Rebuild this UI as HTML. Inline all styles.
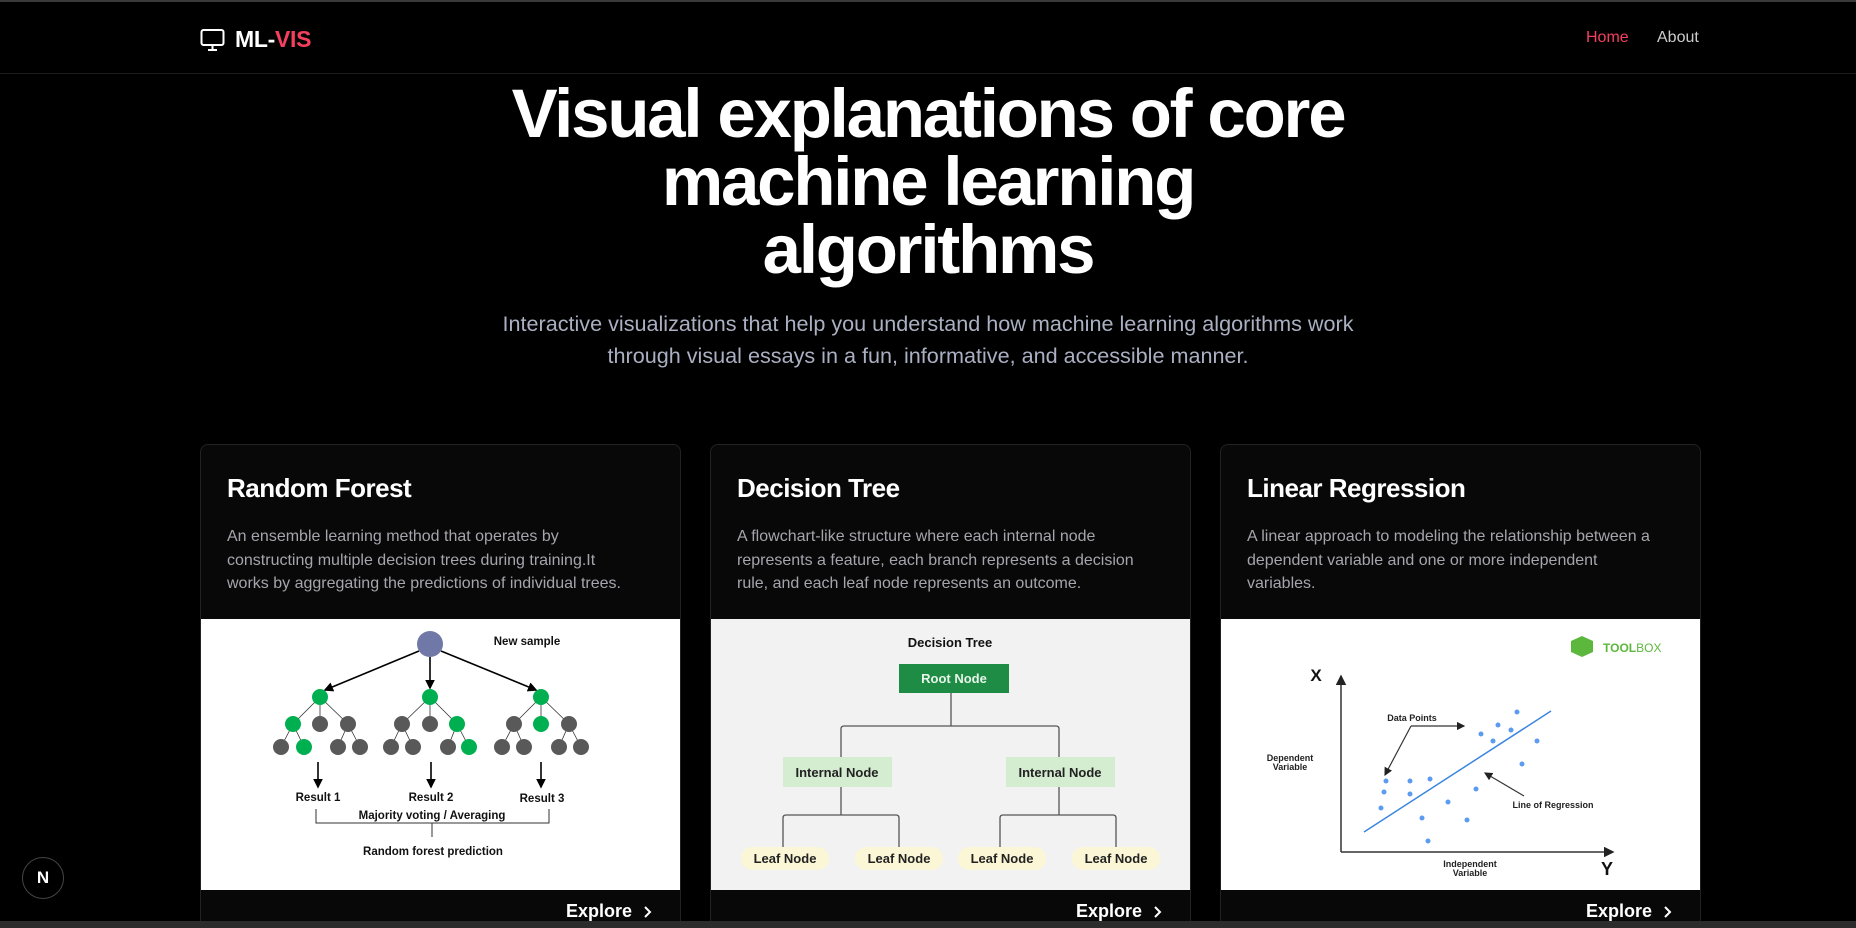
<!DOCTYPE html>
<html><head><meta charset="utf-8"><style>
*{margin:0;padding:0;box-sizing:border-box}
html,body{width:1856px;height:928px;overflow:hidden;background:#000;font-family:"Liberation Sans",sans-serif;color:#fff;position:relative}
.topline{position:absolute;left:0;top:0;width:1856px;height:2px;background:#3a3a3a}
.nav{position:absolute;left:0;top:2px;width:1856px;height:72px;border-bottom:1px solid #1c1c1c}
.logo{position:absolute;left:200px;top:24px;display:flex;align-items:center;font-weight:bold;font-size:23px;letter-spacing:-0.3px}
.logo svg{margin-right:10px}
.links{position:absolute;top:27px;font-size:16px}
h1{position:absolute;left:0;top:80px;width:1856px;text-align:center;font-size:69px;line-height:68px;font-weight:bold;letter-spacing:-2.2px}
.sub{position:absolute;left:0;top:308px;width:1856px;text-align:center;font-size:21.6px;line-height:32px;color:#aab0c2}
.card{position:absolute;top:444px;width:481px;height:484px;background:#080808;border:1px solid #222;border-bottom:none;border-radius:8px 8px 0 0;overflow:hidden}
.card h2{position:absolute;left:26px;top:28px;font-size:26px;font-weight:bold;letter-spacing:-0.5px}
.card p{position:absolute;left:26px;top:80px;width:460px;font-size:16px;line-height:23.5px;color:#a5a5ad;white-space:nowrap}
.card .img{position:absolute;left:0;top:174px;width:481px;height:271px}
.ex{position:absolute;right:28px;top:456px;font-size:18px;font-weight:bold;display:flex;align-items:center}
.ex svg{margin-left:10px}
.bar{position:absolute;left:0;top:921px;width:1856px;height:7px;background:#2c2c2c}
.nbtn{position:absolute;left:22px;top:857px;width:42px;height:42px;border-radius:50%;background:#000;border:1px solid #444;display:flex;align-items:center;justify-content:center;font-weight:bold;font-size:17px}
svg text{font-family:"Liberation Sans",sans-serif;font-weight:bold}
</style></head><body>
<div class="topline"></div>
<div class="nav">
 <div class="logo"><svg width="25" height="24" viewBox="0 0 25 24" fill="none" stroke="#fff" stroke-width="2"><rect x="1.5" y="2" width="22" height="15" rx="2"/><path d="M12.5 17v4M8 22h9"/></svg><span>ML-</span><span style="color:#f43f5e">VIS</span></div>
 <div class="links" style="left:1586px;color:#f43f5e">Home</div>
 <div class="links" style="left:1657px;color:#ccc">About</div>
</div>
<h1>Visual explanations of core<br>machine learning<br>algorithms</h1>
<div class="sub">Interactive visualizations that help you understand how machine learning algorithms work<br>through visual essays in a fun, informative, and accessible manner.</div>

<div class="card" style="left:200px">
 <h2>Random Forest</h2>
 <p>An ensemble learning method that operates by<br>constructing multiple decision trees during training.It<br>works by aggregating the predictions of individual trees.</p>
 <svg class="img" viewBox="0 0 481 271"><rect width="481" height="271" fill="#fff"/>
  <defs><marker id="a" markerWidth="6" markerHeight="6" refX="5" refY="3" orient="auto"><path d="M0 0L6 3L0 6z" fill="#000"/></marker></defs>
  <g stroke="#000" stroke-width="1.6" marker-end="url(#a)"><line x1="218" y1="32" x2="124" y2="71"/><line x1="229" y1="38" x2="229" y2="69"/><line x1="240" y1="32" x2="335" y2="71"/>
  <line x1="117" y1="143" x2="117" y2="168"/><line x1="230" y1="143" x2="230" y2="168"/><line x1="340" y1="143" x2="340" y2="168"/></g>
  <g stroke="#333" stroke-width="0.8"><path d="M119 78L92 105M119 78L119 105M119 78L147 105M92 105L80 128M92 105L103 128M147 105L137 128M147 105L159 128M229 78L201 105M229 78L229 105M229 78L256 105M201 105L190 128M201 105L212 128M256 105L247 128M256 105L268 128M340 78L313 105M340 78L340 105M340 78L368 105M313 105L301 128M313 105L323 128M368 105L358 128M368 105L380 128"/></g>
  <circle cx="229" cy="25" r="13" fill="#7078a8"/>
  <g fill="#00b050"><circle cx="119" cy="78" r="8"/><circle cx="229" cy="78" r="8"/><circle cx="340" cy="78" r="8"/><circle cx="92" cy="105" r="8"/><circle cx="256" cy="105" r="8"/><circle cx="340" cy="105" r="8"/><circle cx="103" cy="128" r="8"/><circle cx="268" cy="128" r="8"/></g>
  <g fill="#595959"><circle cx="119" cy="105" r="8"/><circle cx="147" cy="105" r="8"/><circle cx="201" cy="105" r="8"/><circle cx="229" cy="105" r="8"/><circle cx="313" cy="105" r="8"/><circle cx="368" cy="105" r="8"/><circle cx="80" cy="128" r="8"/><circle cx="137" cy="128" r="8"/><circle cx="159" cy="128" r="8"/><circle cx="190" cy="128" r="8"/><circle cx="212" cy="128" r="8"/><circle cx="247" cy="128" r="8"/><circle cx="301" cy="128" r="8"/><circle cx="323" cy="128" r="8"/><circle cx="358" cy="128" r="8"/><circle cx="380" cy="128" r="8"/></g>
  <g font-size="11.5" fill="#111" text-anchor="middle"><text x="326" y="26">New sample</text><text x="117" y="182">Result 1</text><text x="230" y="182">Result 2</text><text x="341" y="183">Result 3</text><text x="231" y="200">Majority voting / Averaging</text><text x="232" y="236">Random forest prediction</text></g>
  <path d="M115 190V204H348V190M231 204V218" stroke="#333" fill="none" stroke-width="1"/>
 </svg>
 <div class="ex">Explore<svg width="10" height="14" viewBox="0 0 10 14" fill="none" stroke="#fff" stroke-width="2"><path d="M3 2l5 5-5 5"/></svg></div>
</div>

<div class="card" style="left:710px">
 <h2>Decision Tree</h2>
 <p>A flowchart-like structure where each internal node<br>represents a feature, each branch represents a decision<br>rule, and each leaf node represents an outcome.</p>
 <svg class="img" viewBox="0 0 481 271"><rect width="481" height="271" fill="#f2f2f2"/>
  <g stroke="#555" stroke-width="1.3" fill="none"><path d="M240 74V107M130 138V110Q130 107 133 107H345Q348 107 348 110V138M130 168V196M72 228V199Q72 196 75 196H185Q188 196 188 199V228M348 168V196M289 228V199Q289 196 292 196H402Q405 196 405 199V228"/></g>
  <text x="239" y="28" font-size="13" text-anchor="middle" fill="#111">Decision Tree</text>
  <rect x="188" y="45" width="110" height="29" fill="#1e8c45"/><text x="243" y="64" font-size="13" fill="#e8f5ea" text-anchor="middle">Root Node</text>
  <rect x="72" y="138" width="109" height="30" fill="#d4ecd0"/><text x="126" y="158" font-size="13" fill="#222" text-anchor="middle">Internal Node</text>
  <rect x="295" y="138" width="109" height="30" fill="#d4ecd0"/><text x="349" y="158" font-size="13" fill="#222" text-anchor="middle">Internal Node</text>
  <g fill="#fbf6d5"><rect x="30" y="228" width="88" height="23" rx="11"/><rect x="144" y="228" width="88" height="23" rx="11"/><rect x="247" y="228" width="88" height="23" rx="11"/><rect x="361" y="228" width="88" height="23" rx="11"/></g>
  <g font-size="13" fill="#222" text-anchor="middle"><text x="74" y="244">Leaf Node</text><text x="188" y="244">Leaf Node</text><text x="291" y="244">Leaf Node</text><text x="405" y="244">Leaf Node</text></g>
 </svg>
 <div class="ex">Explore<svg width="10" height="14" viewBox="0 0 10 14" fill="none" stroke="#fff" stroke-width="2"><path d="M3 2l5 5-5 5"/></svg></div>
</div>

<div class="card" style="left:1220px">
 <h2>Linear Regression</h2>
 <p>A linear approach to modeling the relationship between a<br>dependent variable and one or more independent<br>variables.</p>
 <svg class="img" viewBox="0 0 481 271"><rect width="481" height="271" fill="#fff"/>
  <defs><marker id="b" markerWidth="7" markerHeight="7" refX="6" refY="3.5" orient="auto"><path d="M0 0L7 3.5L0 7z" fill="#222"/></marker></defs>
  <path d="M350 22l11-5 11 5v11l-11 5-11-5z" fill="#5cb83c"/><text x="382" y="33" font-size="12" fill="#5cb83c">TOOL<tspan font-weight="normal">BOX</tspan></text>
  <g stroke="#333" stroke-width="1.5" fill="none" marker-end="url(#b)"><path d="M120 233V57"/><path d="M120 233H392"/></g>
  <text x="95" y="62" font-size="17" fill="#111" text-anchor="middle" font-weight="normal">X</text>
  <text x="386" y="256" font-size="18" fill="#111" text-anchor="middle" font-weight="normal">Y</text>
  <line x1="143" y1="213" x2="330" y2="92" stroke="#3a86e0" stroke-width="1.5"/>
  <g fill="#5b9bf0"><circle cx="296" cy="93" r="2.5"/><circle cx="277" cy="106" r="2.5"/><circle cx="290" cy="111" r="2.5"/><circle cx="260" cy="115" r="2.5"/><circle cx="272" cy="122" r="2.5"/><circle cx="316" cy="122" r="2.5"/><circle cx="301" cy="145" r="2.5"/><circle cx="165" cy="162" r="2.5"/><circle cx="189" cy="162" r="2.5"/><circle cx="209" cy="160" r="2.5"/><circle cx="163" cy="173" r="2.5"/><circle cx="189" cy="175" r="2.5"/><circle cx="255" cy="170" r="2.5"/><circle cx="227" cy="183" r="2.5"/><circle cx="160" cy="189" r="2.5"/><circle cx="201" cy="199" r="2.5"/><circle cx="246" cy="201" r="2.5"/><circle cx="207" cy="222" r="2.5"/></g>
  <g stroke="#333" stroke-width="1.2" fill="none" marker-end="url(#b)"><path d="M190 107H243"/><path d="M190 107L164 156"/><path d="M303 177L264 154"/></g>
  <g font-size="9" fill="#222" text-anchor="middle" font-weight="normal"><text x="191" y="102">Data Points</text><text x="69" y="142">Dependent</text><text x="69" y="151">Variable</text><text x="249" y="248">Independent</text><text x="249" y="257">Variable</text><text x="332" y="189">Line of Regression</text></g>
 </svg>
 <div class="ex">Explore<svg width="10" height="14" viewBox="0 0 10 14" fill="none" stroke="#fff" stroke-width="2"><path d="M3 2l5 5-5 5"/></svg></div>
</div>

<div class="bar"></div>
<div class="nbtn">N</div>
</body></html>
